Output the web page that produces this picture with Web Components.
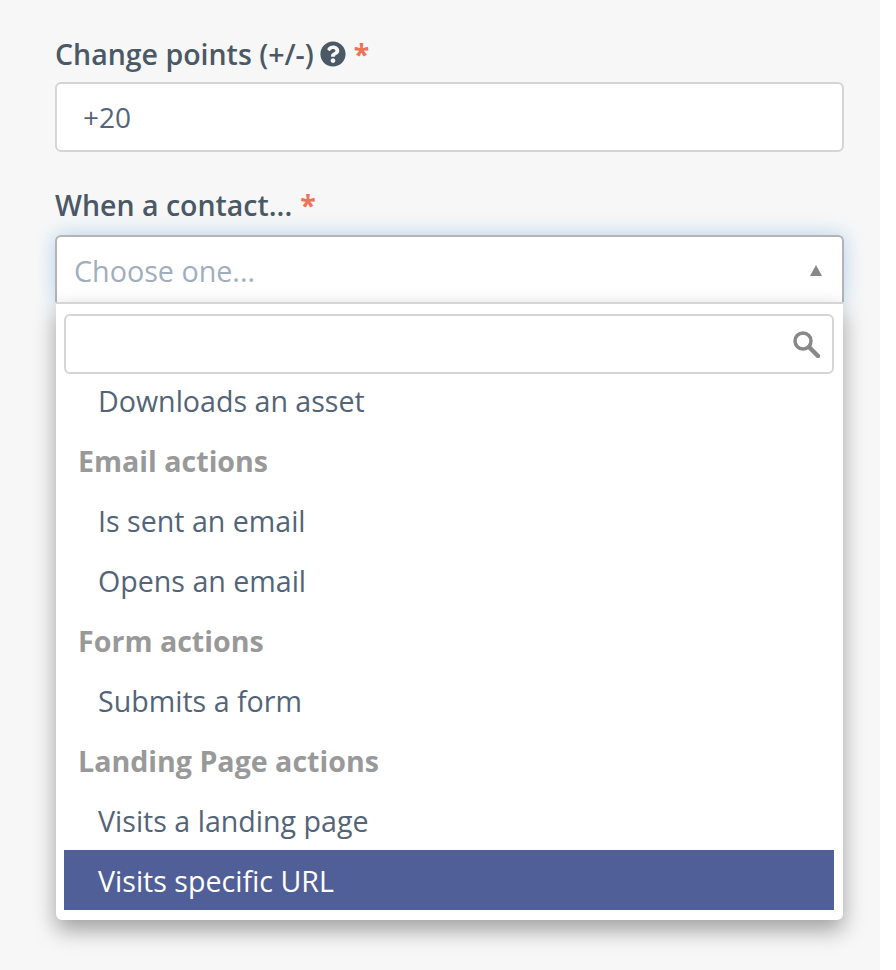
<!DOCTYPE html>
<html>
<head>
<meta charset="utf-8">
<title>Points</title>
<style>
    html, body { margin: 0; padding: 0; background: #fff; height: 970px; overflow: hidden; }
    body { font-family: "Open Sans", sans-serif; }
</style>
</head>
<body>
<points-form>
    <form-field label="Change points (+/-)" help>
        <text-input value="+20"></text-input>
    </form-field>
    <form-field label="When a contact...">
        <chosen-select placeholder="Choose one...">
            <chosen-option>Downloads an asset</chosen-option>
            <chosen-group>Email actions</chosen-group>
            <chosen-option>Is sent an email</chosen-option>
            <chosen-option>Opens an email</chosen-option>
            <chosen-group>Form actions</chosen-group>
            <chosen-option>Submits a form</chosen-option>
            <chosen-group>Landing Page actions</chosen-group>
            <chosen-option>Visits a landing page</chosen-option>
            <chosen-option active>Visits specific URL</chosen-option>
        </chosen-select>
    </form-field>
</points-form>

<script>
class pointsForm extends HTMLElement {
    constructor() {
        super()
        this.attachShadow({ mode: 'open' });
    }
    connectedCallback() {
        this.shadowRoot.innerHTML = `
            <style>
                :host {
                    display: block;
                    box-sizing: border-box;
                    width: 880px;
                    height: 970px;
                    padding: 36px 36px 0 55px;
                    background: #f7f7f7;
                }
                .stack {
                    display: flex;
                    flex-direction: column;
                    gap: 35px;
                }
            </style>
            <div class="stack"><slot></slot></div>
        `;
    }
}

class formField extends HTMLElement {
    constructor() {
        super()
        this.attachShadow({ mode: 'open' });
    }
    connectedCallback() {
        const help = this.hasAttribute('help') ? `
            <svg class="help" viewBox="0 0 512 512" width="26" height="26">
                <path fill="#4b5866" d="M504 256c0 137-111 248-248 248S8 393 8 256 119 8 256 8s248 111 248 248zM262.700 90c-54.500 0-89.300 23-116.600 63.800-3.500 5.300-2.400 12.400 2.700 16.300l34.700 26.300c5.200 3.900 12.600 3 16.700-2.100 17.900-22.700 30.100-35.800 57.300-35.800 20.400 0 45.700 13.100 45.700 32.900 0 15-12.400 22.700-32.600 34-23.600 13.200-54.800 29.700-54.800 70.900V300c0 6.600 5.400 12 12 12h56c6.600 0 12-5.400 12-12v-1.300c0-28.600 83.500-29.800 83.500-107.100C379.300 133.400 319 90 262.700 90zM256 339c-25.500 0-46.200 20.700-46.200 46.200 0 25.500 20.700 46.200 46.200 46.200s46.200-20.700 46.200-46.200c0-25.500-20.700-46.200-46.200-46.200z"/>
            </svg>` : '';
        this.shadowRoot.innerHTML = `
            <style>
                :host {
                    display: flex;
                    flex-direction: column;
                }
                label {
                    display: flex;
                    align-items: center;
                    height: 36px;
                    margin-bottom: 10px;
                    font-size: 28.5px;
                    font-weight: 600;
                    color: #4b5866;
                    white-space: nowrap;
                }
                .help { margin-left: 6px; }
                .req {
                    margin-left: 8px;
                    color: #ef7157;
                    font-size: 28.5px;
                    font-weight: 700;
                }
            </style>
            <label>${this.getAttribute('label')}${help}<span class="req">*</span></label>
            <slot></slot>
        `;
    }
}

class textInput extends HTMLElement {
    constructor() {
        super()
        this.attachShadow({ mode: 'open' });
    }
    connectedCallback() {
        this.shadowRoot.innerHTML = `
            <style>
                :host {
                    box-sizing: border-box;
                    width: 789px;
                    height: 70px;
                    padding: 0 26px;
                    display: flex;
                    align-items: center;
                    background: #fff;
                    border: 2px solid #d5d5d5;
                    border-radius: 6px;
                    font-size: 28px;
                    color: #546478;
                }
            </style>
            <span>${this.getAttribute('value')}</span>
        `;
    }
}

class chosenSelect extends HTMLElement {
    constructor() {
        super()
        this.attachShadow({ mode: 'open' });
    }
    connectedCallback() {
        this.shadowRoot.innerHTML = `
            <style>
                :host {
                    display: block;
                    width: 789px;
                    margin-top: 2px;
                }
                .single {
                    box-sizing: border-box;
                    height: 67px;
                    padding: 2px 20px 0 17px;
                    display: flex;
                    align-items: center;
                    justify-content: space-between;
                    background: #fff;
                    border: 2px solid #b4b4b4;
                    border-bottom: 0;
                    border-radius: 6px 6px 0 0;
                    box-shadow: 0 0 20px rgba(82, 156, 224, .42);
                    font-size: 28.7px;
                    color: #a1aebd;
                }
                .arrow {
                    width: 0;
                    height: 0;
                    border-left: 6.5px solid transparent;
                    border-right: 6.5px solid transparent;
                    border-bottom: 11px solid #888;
                }
                .drop {
                    position: relative;
                    box-sizing: border-box;
                    height: 618px;
                    margin: 0 1px;
                    padding: 10px 9px 10px 8px;
                    background: #fff;
                    border-top: 2px solid #d5d5d5;
                    border-radius: 0 0 6px 6px;
                    box-shadow: 0 10px 22px rgba(0, 0, 0, .36);
                    overflow: hidden;
                }
                .search {
                    box-sizing: border-box;
                    height: 60px;
                    margin-bottom: -4px;
                    display: flex;
                    align-items: center;
                    justify-content: flex-end;
                    padding-right: 12px;
                    background: #fff;
                    border: 2px solid #d5d5d5;
                    border-radius: 6px;
                }
            </style>
            <div class="single">
                <span>${this.getAttribute('placeholder')}</span>
                <span class="arrow"></span>
            </div>
            <div class="drop">
                <div class="search">
                    <svg viewBox="0 0 28 28" width="28" height="28" fill="none" stroke="#888">
                        <circle cx="11" cy="11" r="8" stroke-width="3.500"/>
                        <path d="M17 17l9 9" stroke-width="4.500" stroke-linecap="round"/>
                    </svg>
                </div>
                <slot></slot>
            </div>
        `;
    }
}

class chosenOption extends HTMLElement {
    constructor() {
        super()
        this.attachShadow({ mode: 'open' });
    }
    connectedCallback() {
        this.shadowRoot.innerHTML = `
            <style>
                :host {
                    display: flex;
                    align-items: center;
                    box-sizing: border-box;
                    height: 60px;
                    padding-left: 34px;
                    font-size: 28.6px;
                    color: #546478;
                }
                :host([active]) {
                    background: #505f97;
                    color: #fff;
                }
            </style>
            <slot></slot>
        `;
    }
}

class chosenGroup extends HTMLElement {
    constructor() {
        super()
        this.attachShadow({ mode: 'open' });
    }
    connectedCallback() {
        this.shadowRoot.innerHTML = `
            <style>
                :host {
                    display: flex;
                    align-items: center;
                    box-sizing: border-box;
                    height: 60px;
                    padding-left: 14px;
                    font-size: 28.6px;
                    font-weight: 700;
                    color: #999;
                }
            </style>
            <slot></slot>
        `;
    }
}

customElements.define('points-form', pointsForm);
customElements.define('form-field', formField);
customElements.define('text-input', textInput);
customElements.define('chosen-select', chosenSelect);
customElements.define('chosen-option', chosenOption);
customElements.define('chosen-group', chosenGroup);
</script>
</body>
</html>
